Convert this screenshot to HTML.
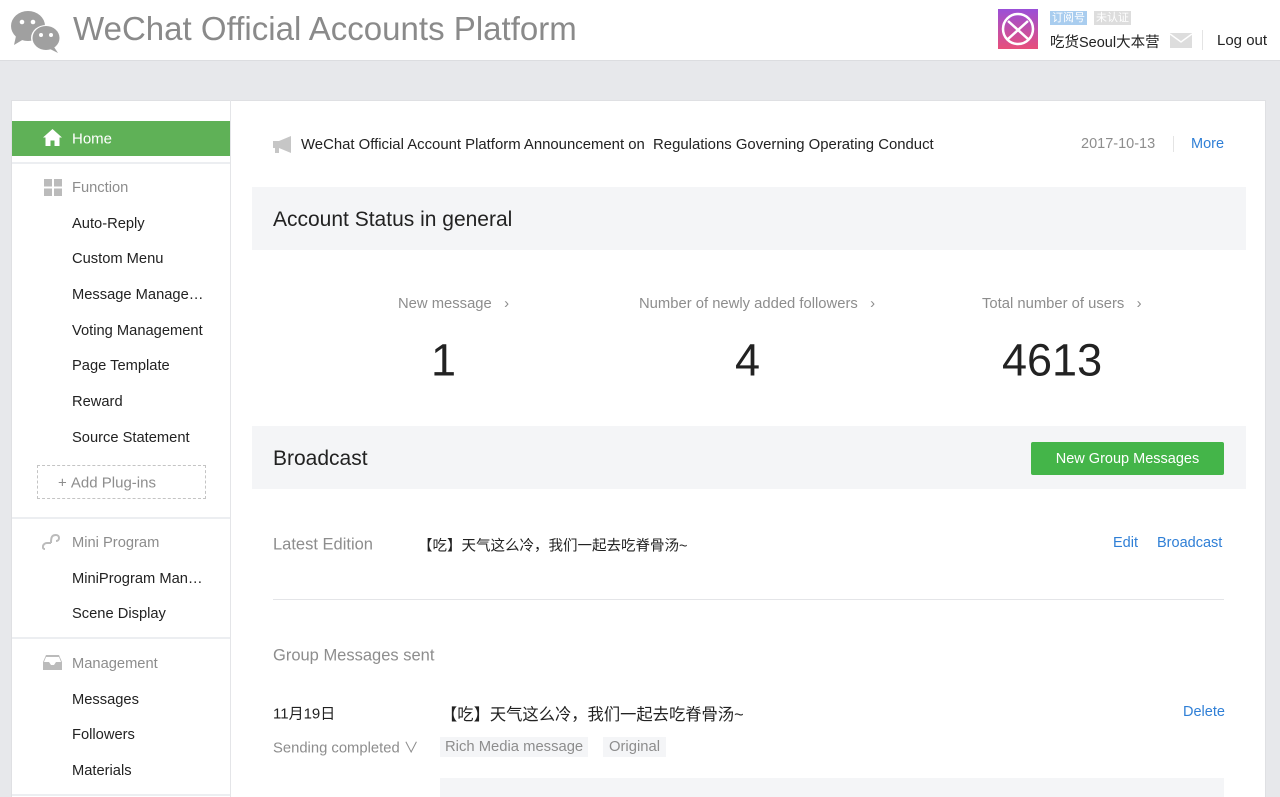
<!DOCTYPE html>
<html style="width:1280px;height:797px;overflow:hidden"><head><meta charset="utf-8"><style>
*{margin:0;padding:0;box-sizing:border-box}
body{width:1280px;height:797px;overflow:hidden;background:#e7e8eb;font-family:"Liberation Sans","Noto Sans CJK SC",sans-serif;color:#222;position:relative}
.a{position:absolute;white-space:nowrap}
.hdr{position:absolute;left:0;top:0;width:1280px;height:61px;background:#fff;border-bottom:1px solid #dcdde0}
.panel{position:absolute;left:11px;top:100px;width:1255px;height:697px;background:#fff;border:1px solid #dfe0e3;border-bottom:none}
.side{position:absolute;left:11px;top:100px;width:220px;height:697px;border-right:1px solid #e4e5e8}
.sep{position:absolute;left:12px;width:218px;height:2px;background:#eceef1}
.si{position:absolute;left:72px;font-size:14.7px;color:#222;transform:translateY(-45%)}
.sh{position:absolute;left:72px;font-size:14.7px;color:#8d8d8d;transform:translateY(-45%)}
.c{transform:translateY(-45%)}
.blue{color:#2f7fd6}
</style></head><body>
<div class="hdr"></div>
<svg class="a" style="left:10px;top:9px" width="52" height="44" viewBox="0 0 52 44">
<ellipse cx="18" cy="17" rx="17" ry="15" fill="#a0a0a0"/><path d="M6 27 L4 36 L14 30Z" fill="#a0a0a0"/>
<circle cx="12" cy="13" r="2.3" fill="#fff"/><circle cx="23" cy="13" r="2.3" fill="#fff"/>
<ellipse cx="36" cy="29" rx="15" ry="13" fill="#fff"/><ellipse cx="36" cy="29" rx="13.5" ry="12" fill="#a0a0a0"/><path d="M44 38 L48 44 L40 40Z" fill="#a0a0a0"/>
<circle cx="31" cy="26" r="2" fill="#fff"/><circle cx="41" cy="26" r="2" fill="#fff"/></svg>
<div class="a" style="left:73px;top:10px;font-size:33px;color:#8a8a8a;letter-spacing:0.02px">WeChat Official Accounts Platform</div>
<svg class="a" style="left:998px;top:9px" width="40" height="40"><defs><linearGradient id="g" x1="0" y1="0" x2="0" y2="1"><stop offset="0" stop-color="#9a4fd8"/><stop offset="1" stop-color="#e84f7a"/></linearGradient></defs><rect width="40" height="40" fill="url(#g)"/><circle cx="20" cy="20" r="15" fill="none" stroke="#fff" stroke-width="2.5"/><path d="M10 12 L30 30 M30 12 L10 30" stroke="#fff" stroke-width="2.5"/></svg>
<div class="a" style="left:1050px;top:11px;font-size:11px;background:#a9cdef;color:#fff;padding:0 2px;line-height:14px">订阅号</div>
<div class="a" style="left:1094px;top:11px;font-size:11px;background:#ddd;color:#fff;padding:0 2px;line-height:14px">未认证</div>
<div class="a" style="left:1050px;top:31px;font-size:14.5px;color:#222">吃货Seoul大本营</div>
<svg class="a" style="left:1170px;top:33px" width="22" height="15"><rect width="22" height="15" fill="#ddd"/><path d="M0 1 L11 9 L22 1" stroke="#fff" fill="none" stroke-width="1.5"/></svg>
<div class="a" style="left:1202px;top:30px;width:1px;height:20px;background:#e4e4e4"></div>
<div class="a" style="left:1217px;top:32px;font-size:15px;color:#222">Log out</div>

<div class="panel"></div>
<div class="side"></div>
<div class="a" style="left:12px;top:121px;width:218px;height:35px;background:#5fb157"></div>
<svg class="a" style="left:43px;top:129px" width="19" height="17" viewBox="0 0 19 17"><path d="M9.5 0 L19 8.5 L16.5 8.5 L16.5 17 L11.5 17 L11.5 11.5 L7.5 11.5 L7.5 17 L2.5 17 L2.5 8.5 L0 8.5Z" fill="#fff"/></svg>
<div class="a c" style="left:72px;top:138px;font-size:15px;color:#fff">Home</div>
<div class="sep" style="top:162px"></div>
<svg class="a" style="left:44px;top:179px" width="18" height="17"><rect width="8" height="7.5" fill="#bbb"/><rect x="10" width="8" height="7.5" fill="#bbb"/><rect y="9.5" width="8" height="7.5" fill="#bbb"/><rect x="10" y="9.5" width="8" height="7.5" fill="#bbb"/></svg>
<div class="sh" style="top:187px">Function</div>
<div class="si" style="top:223px">Auto-Reply</div>
<div class="si" style="top:258px">Custom Menu</div>
<div class="si" style="top:294px">Message Manage…</div>
<div class="si" style="top:330px">Voting Management</div>
<div class="si" style="top:365px">Page Template</div>
<div class="si" style="top:401px">Reward</div>
<div class="si" style="top:437px">Source Statement</div>
<div class="a" style="left:37px;top:465px;width:169px;height:34px;border:1px dashed #c4c4c4"></div>
<div class="a c" style="left:58px;top:482px;font-size:15px;color:#8d8d8d">+&nbsp;Add Plug-ins</div>
<div class="sep" style="top:517px"></div>
<svg class="a" style="left:42px;top:533px" width="20" height="18"><path d="M3 16 C-1 16 1 10 5 10 L9 10 M9 10 C9 4 10 2 14 2 C18 2 18 8 14 8" stroke="#bbb" stroke-width="2" fill="none"/></svg>
<div class="sh" style="top:542px">Mini Program</div>
<div class="si" style="top:578px">MiniProgram Man…</div>
<div class="si" style="top:613px">Scene Display</div>
<div class="sep" style="top:637px"></div>
<svg class="a" style="left:43px;top:655px" width="19" height="15"><path d="M3 0 H16 L19 7 V15 H0 V7Z" fill="#bbb"/><path d="M3 2 H16 L18 7 H13 L11 10 H8 L6 7 H1Z" fill="#fff"/></svg>
<div class="sh" style="top:663px">Management</div>
<div class="si" style="top:699px">Messages</div>
<div class="si" style="top:734px">Followers</div>
<div class="si" style="top:770px">Materials</div>
<div class="sep" style="top:794px"></div>

<svg class="a" style="left:273px;top:136px" width="22" height="17"><path d="M0 5 H6 L18 0 V17 L6 12 H0Z" fill="#c6c6c6"/><rect x="2" y="12" width="4" height="5" fill="#c6c6c6"/></svg>
<div class="a c" style="left:301px;top:144px;font-size:14.9px">WeChat Official Account Platform Announcement on &nbsp;Regulations Governing Operating Conduct</div>
<div class="a c" style="left:1081px;top:143px;font-size:14.5px;color:#8d8d8d">2017-10-13</div>
<div class="a" style="left:1173px;top:136px;width:1px;height:16px;background:#e4e4e4"></div>
<div class="a c blue" style="left:1191px;top:143px;font-size:14.5px">More</div>

<div class="a" style="left:252px;top:187px;width:994px;height:63px;background:#f4f5f7"></div>
<div class="a c" style="left:273px;top:219px;font-size:21px">Account Status in general</div>
<div class="a c" style="left:398px;top:303px;font-size:14.8px;color:#8d8d8d">New message &nbsp;&nbsp;›</div>
<div class="a c" style="left:639px;top:303px;font-size:14.8px;color:#8d8d8d">Number of newly added followers &nbsp;&nbsp;›</div>
<div class="a c" style="left:982px;top:303px;font-size:14.8px;color:#8d8d8d">Total number of users &nbsp;&nbsp;›</div>
<div class="a c" style="left:431px;top:358px;font-size:45px">1</div>
<div class="a c" style="left:735px;top:358px;font-size:45px">4</div>
<div class="a c" style="left:1002px;top:358px;font-size:45px">4613</div>

<div class="a" style="left:252px;top:426px;width:994px;height:63px;background:#f4f5f7"></div>
<div class="a c" style="left:273px;top:458px;font-size:21px">Broadcast</div>
<div class="a" style="left:1031px;top:442px;width:193px;height:33px;background:#44b549;border-radius:2px;color:#fff;font-size:14.5px;text-align:center;line-height:34px">New Group Messages</div>

<div class="a c" style="left:273px;top:544px;font-size:16.5px;color:#8d8d8d">Latest Edition</div>
<div class="a c" style="left:418px;top:544px;font-size:14.5px">【吃】天气这么冷，我们一起去吃脊骨汤~</div>
<div class="a c blue" style="left:1113px;top:542px;font-size:14.5px">Edit</div>
<div class="a c blue" style="left:1157px;top:542px;font-size:14.5px">Broadcast</div>
<div class="a" style="left:273px;top:599px;width:951px;height:1px;background:#e4e5e8"></div>
<div class="a c" style="left:273px;top:655px;font-size:16.5px;color:#8d8d8d">Group Messages sent</div>
<div class="a c" style="left:273px;top:712px;font-size:15px">11月19日</div>
<div class="a c" style="left:441px;top:712px;font-size:16.3px">【吃】天气这么冷，我们一起去吃脊骨汤~</div>
<div class="a c blue" style="left:1183px;top:711px;font-size:14.5px">Delete</div>
<div class="a c" style="left:273px;top:746px;font-size:14.8px;color:#8d8d8d">Sending completed ∨</div>
<div class="a" style="left:440px;top:737px;padding:0 5px;height:20px;line-height:21px;background:#f4f5f7;font-size:14.8px;color:#8d8d8d">Rich Media message</div>
<div class="a" style="left:603px;top:737px;padding:0 6px;height:20px;line-height:21px;background:#f4f5f7;font-size:14.8px;color:#8d8d8d">Original</div>
<div class="a" style="left:440px;top:778px;width:784px;height:19px;background:#f4f5f7"></div>
</body></html>
